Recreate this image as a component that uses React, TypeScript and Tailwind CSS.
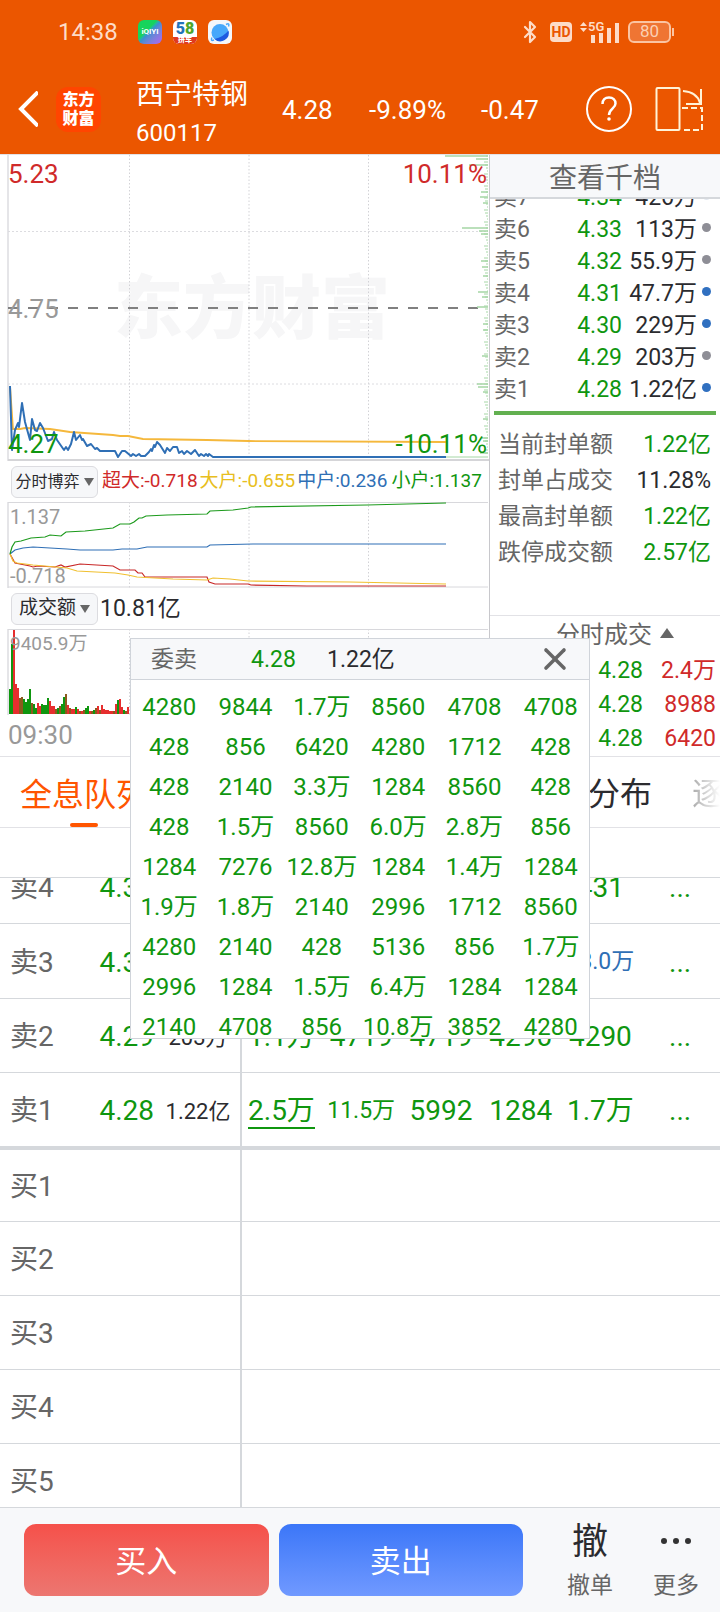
import { Bluetooth, X } from "lucide-react";

const asks = [
  { label: "卖7", price: "4.34", amount: "426万", dot: "bg-slate-200" },
  { label: "卖6", price: "4.33", amount: "113万", dot: "bg-[#8e8e96]" },
  { label: "卖5", price: "4.32", amount: "55.9万", dot: "bg-[#8e8e96]" },
  { label: "卖4", price: "4.31", amount: "47.7万", dot: "bg-[#3070c0]" },
  { label: "卖3", price: "4.30", amount: "229万", dot: "bg-[#3070c0]" },
  { label: "卖2", price: "4.29", amount: "203万", dot: "bg-[#8e8e96]" },
  { label: "卖1", price: "4.28", amount: "1.22亿", dot: "bg-[#3070c0]" },
];

const summary = [
  { label: "当前封单额", value: "1.22亿", color: "text-[#0f960f]" },
  { label: "封单占成交", value: "11.28%", color: "text-[#2b2b2f]" },
  { label: "最高封单额", value: "1.22亿", color: "text-[#0f960f]" },
  { label: "跌停成交额", value: "2.57亿", color: "text-[#0f960f]" },
];

const trades = [
  ["4.28", "2.4万"],
  ["4.28", "8988"],
  ["4.28", "6420"],
];

const queue = [
  ["4280", "9844", "1.7万", "8560", "4708", "4708"],
  ["428", "856", "6420", "4280", "1712", "428"],
  ["428", "2140", "3.3万", "1284", "8560", "428"],
  ["428", "1.5万", "8560", "6.0万", "2.8万", "856"],
  ["1284", "7276", "12.8万", "1284", "1.4万", "1284"],
  ["1.9万", "1.8万", "2140", "2996", "1712", "8560"],
  ["4280", "2140", "428", "5136", "856", "1.7万"],
  ["2996", "1284", "1.5万", "6.4万", "1284", "1284"],
  ["2140", "4708", "856", "10.8万", "3852", "4280"],
];

const levels = [
  { label: "卖4", price: "4.31", amount: "", orders: ["", "", "", "", "431"] },
  { label: "卖3", price: "4.30", amount: "", orders: ["", "", "", "", "13.0万"] },
  { label: "卖2", price: "4.29", amount: "203万", orders: ["1.1万", "4719", "4719", "4290", "4290"] },
  { label: "卖1", price: "4.28", amount: "1.22亿", orders: ["2.5万", "11.5万", "5992", "1284", "1.7万"] },
  { label: "买1" },
  { label: "买2" },
  { label: "买3" },
  { label: "买4" },
  { label: "买5" },
];

const pricePoints =
  "10,231 12,295 15,275 18,268 19,272 22,248 25,267 30,285 32,264 35,275 37,276 40,268 43,273 48,286 52,284 54,277 57,285 64,295 66,292 68,295 71,289 74,277 76,285 80,280 82,285 83,284 87,291 91,289 95,294 97,293 100,296 115,296 118,302 122,296 125,296 131,301 133,299 136,301 139,299 141,301 145,301 149,297 151,294 152,296 154,290 155,292 157,287 160,290 165,298 167,293 170,296 173,292 177,292 179,298 182,296 184,299 187,296 191,299 195,295 199,301 201,299 204,301 206,299 208,301 209,299 213,302 446,302";
const averagePoints =
  "10,231 13,274 20,274 25,273 50,274 70,277 113,280 120,281 128,281 143,284 207,285 248,286 446,287";

const flowLines = [
  { color: "#2f6fb5", points: "10,52 15,48 23,46 33,45 67,47 80,48 113,48 122,47 137,47 147,45 207,45 210,43 253,42 300,42 446,42" },
  { color: "#c82828", points: "10,52 15,61 30,64 33,65 38,64 55,65 61,63 65,65 80,62 113,64 120,68 135,68 138,71 142,71 145,75 207,75 209,80 215,82 248,82 251,83 307,84 446,84" },
  { color: "#f0c030", points: "10,52 13,59 17,61 33,63 67,66 77,69 115,71 128,73 137,75 173,77 207,78 213,76 230,77 248,79 350,80 446,82" },
  { color: "#1c9a1c", points: "10,52 12,45 15,40 21,39 31,36 45,35 50,33 61,34 66,30 85,29 113,26 120,22 130,22 134,20 139,16 142,16 146,14 167,13 207,12 210,9 233,8 248,6 251,5 367,3 446,1" },
];

// height and direction of each minute bar
const volumes =
  "25g 70g 84r 30r 26r 16b 17b 15g 12g 15g 25g 11b 10g 6g 11r 8r 10g 9g 9g 16g 13r 8r 8r 5b 6g 8b 10g 17g 20b 9r 6b 5r 5r 7g 5r 3b 3r 4b 6g 8g 3r 3b 4g 6b 8r 4b 9r 5r 4r 4r 3r 3r 3b 10r 14g 15r 7r 4g 3b 7r"
    .split(" ")
    .map((v) => ({ height: parseInt(v), color: { g: "#0f960f", r: "#e62e2e", b: "#8c5a1e" }[v.slice(-1)] }));

const longTicks: Record<number, number> = { 1: 43, 4: 12, 10: 19, 37: 7, 42: 8, 48: 5, 73: 26, 76: 9, 79: 7, 106: 7, 112: 6, 121: 5, 137: 10, 142: 6, 152: 11, 169: 5, 175: 5, 201: 6, 229: 11, 232: 10, 237: 5, 264: 5, 283: 6, 286: 5, 298: 8 };

function Triangle({ up = false }) {
  return (
    <svg className={up ? "mb-1 h-[10px] w-[14px]" : "h-2 w-[10px]"} viewBox="0 0 10 8" preserveAspectRatio="none" fill="#666">
      <path d={up ? "M5 0L10 8H0z" : "M0 0h10L5 8z"} />
    </svg>
  );
}

function GridLines({ height }: { height: number }) {
  return (
    <g stroke="#d2d2d6">
      {[129.5, 249, 368.5].map((x) => (
        <line key={x} x1={x} x2={x} y1="0" y2={height} strokeDasharray="1.5 2" />
      ))}
      <line x1="8" x2="8" y1="0" y2={height} strokeWidth="1.5" stroke="#dcdce0" />
    </g>
  );
}

function StatusBar() {
  return (
    <div className="flex h-16 items-center pl-[58px] pr-[46px] text-[#fddcc8]">
      <span className="w-20 text-[24px]">14:38</span>
      <div className="flex flex-1 gap-[11px]">
        <span className="flex size-6 items-center justify-center rounded-md bg-linear-135 from-[#16d45c] from-40% via-[#3b8fd0] to-[#b060f0] text-[8px] font-bold text-white">
          iQIYI
        </span>
        <span className="flex size-6 flex-col items-center overflow-hidden rounded-md bg-white leading-none font-black">
          <span className="h-[17px] text-[16px] leading-[18px]">
            <span className="text-[#2274b8]">5</span>
            <span className="text-[#4fa62a]">8</span>
          </span>
          <span className="w-full bg-[#e03a1e] text-center text-[7px] leading-[7px] text-white">拼车</span>
        </span>
        <svg className="size-6" viewBox="0 0 24 24">
          <rect width="24" height="24" rx="6" fill="#f4f7fb" />
          <circle cx="12" cy="12.5" r="8.500" fill="#47a8fb" />
          <path d="M20.500 10.500a8.500 8.500 0 0 1-14 8.500q9-2 14-8.500z" fill="#1e5ae0" />
          <path d="M4 17.500q-2 4 2 2.500M18 4.500q4-2 2.500 2" fill="none" stroke="#47a8fb" strokeWidth="1.500" />
        </svg>
      </div>
      <div className="flex items-center gap-2">
        <Bluetooth className="h-7 w-6" strokeWidth={2.2} />
        <span className="flex h-5 w-[22px] items-center justify-center rounded-sm bg-[#fddcc8] text-[14px] font-bold text-[#eb5600]">
          HD
        </span>
        <svg className="h-6 w-10" viewBox="0 0 40 24" fill="currentColor">
          <path d="M0 6l3.500-4L7 6zM0 8l3.500 4L7 8zM11 15h4v8h-4zM19 13h4v10h-4zM27 8h4v15h-4zM35 3h4v20h-4z" />
          <text x="8" y="11" fontSize="13" fontWeight="600">5G</text>
        </svg>
        <span className="flex items-center gap-px">
          <span className="flex h-[22px] w-[43px] items-center justify-center rounded-md border-2 border-[#fbc4a2] bg-[#ef7533] text-[17px] text-[#fbd0b4]">
            80
          </span>
          <span className="h-2 w-[2px] bg-[#fbc4a2]" />
        </span>
      </div>
    </div>
  );
}

function StockHeader() {
  return (
    <div className="flex h-[90px] items-center pr-4 pl-[18px] text-[26px]">
      <button aria-label="返回" className="w-[38px]">
        <svg className="h-9 w-5" viewBox="0 0 20 36" fill="none" stroke="white" strokeWidth="4">
          <path d="M20 1L3 18l17 17" />
        </svg>
      </button>
      <span className="flex size-[45px] flex-col items-center justify-center rounded-xl bg-[#ff4500] text-[16px] leading-[19px] font-black">
        <span>东方</span>
        <span>财富</span>
      </span>
      <div className="ml-[35px] w-[146px] pt-2">
        <h1 className="text-[28px] leading-10">西宁特钢</h1>
        <div className="text-[24px] leading-9">600117</div>
      </div>
      <span className="w-[87px] pt-[2px]">4.28</span>
      <span className="w-[112px] pt-[2px]">-9.89%</span>
      <span className="flex-1 pt-[2px]">-0.47</span>
      <button aria-label="帮助" className="mr-[23px]">
        <svg className="size-[46px]" viewBox="0 0 46 46" fill="none" stroke="white" strokeWidth="2">
          <circle cx="23" cy="23" r="22" />
          <path d="M16.500 18c0-4 2.500-6.500 6.500-6.500s6.500 2.500 6.500 6c0 5-6.500 5.500-6.500 11.500" strokeWidth="2.500" />
          <circle cx="23" cy="33" r="1.800" fill="white" stroke="none" />
        </svg>
      </button>
      <button aria-label="横屏">
        <svg className="h-[46px] w-[49px]" viewBox="0 0 49 46" fill="none" stroke="#fff3d8" strokeWidth="2">
          <rect x="1.500" y="2" width="23" height="42" rx="1" />
          <path d="M28 5q14 1 17 12M46 3v15H31" />
          <path d="M27 22h20v22H27" strokeDasharray="6 3" />
        </svg>
      </button>
    </div>
  );
}

function PriceChart() {
  return (
    <div className="relative h-[306px] text-[26px] leading-8">
      <svg className="block size-full" viewBox="0 0 489 306" preserveAspectRatio="none" fill="none">
        <text x="114" y="178" fontSize="69" fontWeight="900" fill="#f6f6f7">东方财富</text>
        <GridLines height={306} />
        <g stroke="#dcdce0" strokeDasharray="2 2">
          <line x1="8" x2="488" y1="76.500" y2="76.500" />
          <line x1="8" x2="488" y1="229" y2="229" />
        </g>
        <line x1="8" x2="488" y1="153" y2="153" stroke="#808080" strokeWidth="2" strokeDasharray="10 10" />
        <g stroke="#a5d6a5">
          {Array.from({ length: 100 }, (_, i) => i * 3 + 1).map((y) => (
            <line key={y} x1={487 - (y % 4)} x2="488" y1={y} y2={y} />
          ))}
          {Object.entries(longTicks).map(([y, length]) => (
            <line key={y} x1={488 - length} x2="488" y1={y} y2={y} strokeWidth="1.500" />
          ))}
          <line x1="446" x2="488" y1="302" y2="302" />
        </g>
        <polyline points={averagePoints} stroke="#f5b83c" strokeWidth="1.800" />
        <polyline points={pricePoints} stroke="#2f6fb5" strokeWidth="2" strokeLinejoin="round" />
        <line x1="8" x2="489" y1="305" y2="305" stroke="#d5d5d8" strokeWidth="2" />
      </svg>
      <span className="absolute top-[3px] left-2 text-[#d02a2a]">5.23</span>
      <span className="absolute top-[3px] right-[2px] text-[#d02a2a]">10.11%</span>
      <span className="absolute top-[138px] left-2 text-[#999]">4.75</span>
      <span className="absolute bottom-px left-2 text-[#0f960f]">4.27</span>
      <span className="absolute right-[2px] bottom-px text-[#0f960f]">-10.11%</span>
    </div>
  );
}

function FlowChart() {
  return (
    <div className="relative h-[86px] text-[20px] leading-6 text-[#999]">
      <svg className="block size-full" viewBox="0 0 489 86" preserveAspectRatio="none" fill="none">
        <GridLines height={86} />
        <path d="M8 .5h480M8 85h480" stroke="#d8d8dc" />
        {flowLines.map(({ color, points }) => (
          <polyline key={color} points={points} stroke={color} strokeWidth="1.200" />
        ))}
      </svg>
      <span className="absolute top-[3px] left-[10px]">1.137</span>
      <span className="absolute bottom-0 left-[10px]">-0.718</span>
    </div>
  );
}

function VolumeChart() {
  return (
    <div className="relative h-[86px] text-[19px] leading-6 text-[#999]">
      <svg className="block size-full" viewBox="0 0 489 86" preserveAspectRatio="none">
        <GridLines height={86} />
        <path d="M8 .5h480" stroke="#d8d8dc" />
        {volumes.map(({ height, color }, i) => (
          <rect key={i} x={9 + i * 2} y={85 - height} width="2" height={height} fill={color} />
        ))}
      </svg>
      <span className="absolute top-[3px] left-[10px]">9405.9万</span>
    </div>
  );
}

function Charts() {
  return (
    <section className="min-w-0 flex-1">
      <PriceChart />
      <div className="flex h-[41px] items-center gap-[2px] pl-[11px] text-[19px] whitespace-nowrap">
        <button className="mr-[2px] flex h-8 w-[87px] items-center justify-center gap-1 rounded-md border border-[#dcdce0] bg-[#f6f7f9] text-[16px] text-[#2b2b2f]">
          分时博弈 <Triangle />
        </button>
        <span className="text-[#d02a2a]">超大:-0.718</span>
        <span className="text-[#e8be20]">大户:-0.655</span>
        <span className="text-[#2f6fb5]">中户:0.236</span>
        <span className="ml-[2px] text-[#0f960f]">小户:1.137</span>
      </div>
      <FlowChart />
      <div className="flex h-[41px] items-center pl-[11px] text-[23px] text-[#2b2b2f]">
        <button className="mr-[2px] flex h-8 w-[87px] items-center justify-center gap-1 rounded-md border border-[#dcdce0] bg-[#f6f7f9] text-[19px]">
          成交额 <Triangle />
        </button>
        <span className="pt-[2px]">10.81亿</span>
      </div>
      <VolumeChart />
      <div className="flex h-10 items-center pl-2 text-[26px] text-[#999]">09:30</div>
    </section>
  );
}

function OrderBook() {
  return (
    <aside className="w-[231px] border-l border-[#c8c8cc] text-[23px] text-[#666]">
      <button className="block h-11 w-full border-b-2 border-[#d5d8dc] bg-[#f7f8fa] pt-[6px] text-[28px] leading-9">
        查看千档
      </button>
      <div className="overflow-hidden pr-[9px] pl-1">
        <table className="-mt-[17px] w-full">
          <tbody>
            {asks.map(({ label, price, amount, dot }) => (
              <tr key={label} className="h-8 leading-8">
                <td>{label}</td>
                <td className="text-right text-[#0f960f]">{price}</td>
                <td className="w-[75px] text-right text-[#2b2b2f]">{amount}</td>
                <td className="w-[14px] pb-[6px]">
                  <span className={`ml-auto block size-[9px] rounded-full ${dot}`} />
                </td>
              </tr>
            ))}
          </tbody>
        </table>
      </div>
      <div className="mx-1 mt-[5px] h-1 bg-[#62b050]" />
      <dl className="mt-3 h-[188px] pr-[9px] pl-2">
        {summary.map(({ label, value, color }) => (
          <div key={label} className="flex h-9 items-center justify-between">
            <dt>{label}</dt>
            <dd className={color}>{value}</dd>
          </div>
        ))}
      </dl>
      <button className="flex h-[39px] w-full items-center justify-center gap-2 border-t border-[#e2e2e6] pl-5 text-[24px]">
        分时成交 <Triangle up />
      </button>
      <table className="w-full">
        <tbody>
          {trades.map(([price, amount]) => (
            <tr key={amount} className="h-[34px] leading-[34px]">
              <td className="text-right text-[#0f960f]">{price}</td>
              <td className="w-[77px] pr-1 text-right text-[#d02a2a]">{amount}</td>
            </tr>
          ))}
        </tbody>
      </table>
    </aside>
  );
}

function Tabs() {
  return (
    <nav className="flex h-[71px] justify-between overflow-hidden border-b border-[#e2e2e6] pl-5 text-[32px] whitespace-nowrap">
      <button className="flex flex-col items-center justify-between text-[#ff5500]">
        <span className="pt-[14px]">全息队列</span>
        <span className="h-1 w-7 rounded-full bg-[#ff5500]" />
      </button>
      <div className="flex gap-10">
        <button className="pt-1 text-[#2b2b2f]">分布</button>
        <button className="w-7 overflow-hidden bg-linear-to-r from-[#aaa] to-white bg-clip-text pt-1 text-transparent">逐</button>
      </div>
    </nav>
  );
}

function LevelTable() {
  return (
    <div className="min-h-0 flex-1 overflow-hidden border-t border-[#d5d8dc]">
      <table className="-mt-[28px] w-full table-fixed border-separate border-spacing-0 text-[28px] whitespace-nowrap text-[#0f960f]">
        <colgroup>
          <col className="w-[12%]" />
          <col className="w-[11%]" />
          <col className="w-[76px]" />
        </colgroup>
        <tbody>
          {levels.map(({ label, price, amount, orders }) => {
            const border = label === "卖1" ? "border-b-4" : "border-b";
            const height = label === "卖1" ? "h-[77px]" : label === "买1" ? "h-[72px]" : label === "卖3" ? "h-[75px]" : "h-[74px]";
            const cell = `${border} border-[#d5d8dc] pt-[3px] pb-0`;
            return (
              <tr key={label} className={height}>
                <td className={`${cell} pl-[10px] text-[#666]`}>{label}</td>
                <td className={`${cell} pl-[13px]`}>{price}</td>
                <td className={`${cell} border-r-2 pr-3 text-right text-[22px] text-[#2b2b2f]`}>{amount}</td>
                {[0, 1, 2, 3, 4].map((i) => {
                  const order = orders?.[i] ?? "";
                  return (
                    <td
                      key={i}
                      className={`${cell} text-center ${order.length > 4 ? "text-[23px]" : ""} ${order === "13.0万" ? "text-[#2f6fb5]" : ""}`}
                    >
                      {order === "2.5万" ? <span className="border-b-2 border-[#0f960f]">{order}</span> : order}
                    </td>
                  );
                })}
                <td className={`${cell} text-center`}>{orders && "..."}</td>
              </tr>
            );
          })}
        </tbody>
      </table>
    </div>
  );
}

function QueuePopup() {
  return (
    <div
      role="dialog"
      aria-label="委卖"
      className="absolute inset-x-[130px] top-[638px] h-[401px] overflow-hidden border border-[#d0d4da] bg-white text-[24px]"
    >
      <div className="flex h-[41px] items-center border-b border-[#d0d4da] bg-[#f7f8fa] pr-4 pl-5 text-[23px]">
        <span className="w-[100px] pt-[3px] text-[#666]">委卖</span>
        <span className="w-[76px] pt-[3px] text-[#0f960f]">4.28</span>
        <span className="flex-1 pt-[3px] text-[#2b2b2f]">1.22亿</span>
        <button aria-label="关闭">
          <X className="size-9 text-[#666]" strokeWidth={2.4} />
        </button>
      </div>
      <table className="mt-[7px] w-full table-fixed text-center whitespace-nowrap text-[#0f960f]">
        <tbody>
          {queue.map((row, i) => (
            <tr key={i} className="h-10 leading-10">
              {row.map((cell, j) => (
                <td key={j}>{cell}</td>
              ))}
            </tr>
          ))}
        </tbody>
      </table>
    </div>
  );
}

function BottomBar() {
  return (
    <footer className="flex h-[105px] items-center gap-[10px] border-t border-[#d5d8dc] bg-[#f7f8fa] pl-6 text-[#2b2b2f]">
      <button className="h-[72px] flex-1 rounded-xl bg-linear-to-b from-[#f5504a] to-[#ec7670] pt-1 text-[31px] text-white">
        买入
      </button>
      <button className="h-[72px] flex-1 rounded-xl bg-linear-to-b from-[#3b76f8] to-[#7099ff] pt-1 text-[31px] text-white">
        卖出
      </button>
      <div className="flex w-[187px] justify-end gap-10 pt-1 pr-[21px] text-[23px] leading-8">
        <button className="flex flex-col items-center">
          <span className="h-12 text-[36px] leading-10">撤</span>
          <span className="text-[#666]">撤单</span>
        </button>
        <button className="flex flex-col items-center">
          <span className="flex h-12 items-center gap-[6px] pb-[10px]">
            <i className="size-[6px] rounded-full bg-[#333]" />
            <i className="size-[6px] rounded-full bg-[#333]" />
            <i className="size-[6px] rounded-full bg-[#333]" />
          </span>
          <span className="text-[#666]">更多</span>
        </button>
      </div>
    </footer>
  );
}

export default function App() {
  return (
    <div className="relative flex h-screen flex-col overflow-hidden bg-white font-[Roboto,'Noto_Sans_CJK_SC',sans-serif]">
      <header className="bg-[#eb5600] text-white">
        <StatusBar />
        <StockHeader />
      </header>
      <main className="flex min-h-0 flex-1 flex-col">
        <div className="flex border-y border-[#e2e2e6]">
          <Charts />
          <OrderBook />
        </div>
        <Tabs />
        <div className="h-[49px]" />
        <LevelTable />
      </main>
      <BottomBar />
      <QueuePopup />
    </div>
  );
}
